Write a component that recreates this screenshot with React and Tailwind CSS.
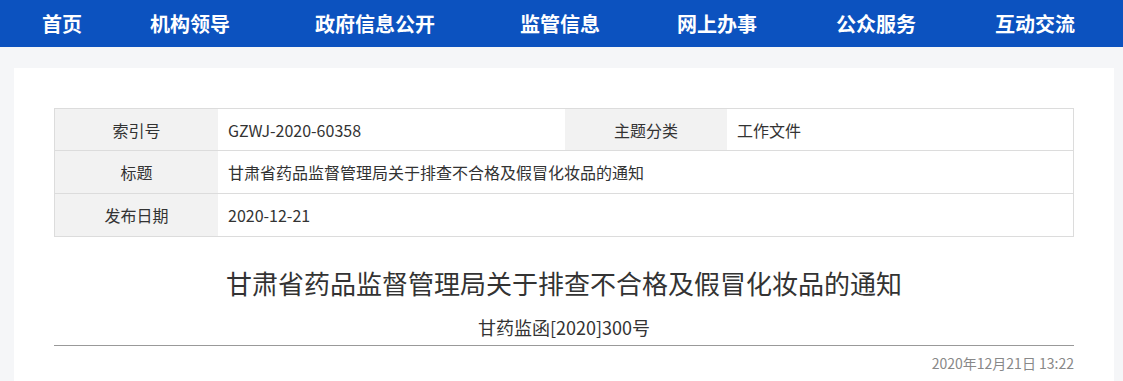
const navItems = [
  { text: "首页", ml: "ml-[42px]" },
  { text: "机构领导", ml: "ml-[68px]" },
  { text: "政府信息公开", ml: "ml-[85px]" },
  { text: "监管信息", ml: "ml-[85px]" },
  { text: "网上办事", ml: "ml-[77px]" },
  { text: "公众服务", ml: "ml-[79px]" },
  { text: "互动交流", ml: "ml-[79px]" },
];

const font = { fontFamily: '"Noto Sans CJK SC", "Noto Sans", sans-serif' };

function Label({ children, className = "" }) {
  return (
    <div className={"flex items-center justify-center bg-[#f2f2f2] text-[16px] text-[#333] " + className}>
      {children}
    </div>
  );
}

function Value({ children, className = "" }) {
  return (
    <div className={"flex items-center pl-[10px] text-[16px] text-[#333] " + className}>
      {children}
    </div>
  );
}

export default function App() {
  return (
    <div style={font} className="min-h-[381px] w-[1123px] overflow-hidden bg-[#f5f6f8]">
      <nav className="flex h-[47px] items-center bg-[#0c52bf]">
        {navItems.map((item) => (
          <a key={item.text} className={"text-[20px] font-bold leading-none text-white " + item.ml}>
            {item.text}
          </a>
        ))}
      </nav>

      <div className="ml-[14px] mr-[9px] mt-[21px] bg-white px-[40px] pt-[40px] pb-[20px]">
        <div className="grid grid-cols-[163px_347px_162px_1fr] border border-[#dcdcdc]">
          <Label className="h-[42px] border-b border-[#dcdcdc]">索引号</Label>
          <Value className="h-[42px] border-b border-[#dcdcdc]">GZWJ-2020-60358</Value>
          <Label className="h-[42px] border-b border-[#dcdcdc]">主题分类</Label>
          <Value className="h-[42px] border-b border-[#dcdcdc]">工作文件</Value>

          <Label className="h-[43px] border-b border-[#dcdcdc]">标题</Label>
          <Value className="col-span-3 h-[43px] border-b border-[#dcdcdc]">
            甘肃省药品监督管理局关于排查不合格及假冒化妆品的通知
          </Value>

          <Label className="h-[42px]">发布日期</Label>
          <Value className="col-span-3 h-[42px]">2020-12-21</Value>
        </div>

        <h1 className="mt-[28px] text-center text-[26px] leading-[36px] text-[#333]">
          甘肃省药品监督管理局关于排查不合格及假冒化妆品的通知
        </h1>
        <p className="mt-[14px] text-center text-[18px] leading-[24px] text-[#333]">
          甘药监函[2020]300号
        </p>
        <div className="mt-[6px] border-t border-[#999]"></div>
        <p className="mt-[7px] text-right text-[14px] leading-[20px] text-[#888]">
          2020年12月21日 13:22
        </p>
      </div>
    </div>
  );
}
